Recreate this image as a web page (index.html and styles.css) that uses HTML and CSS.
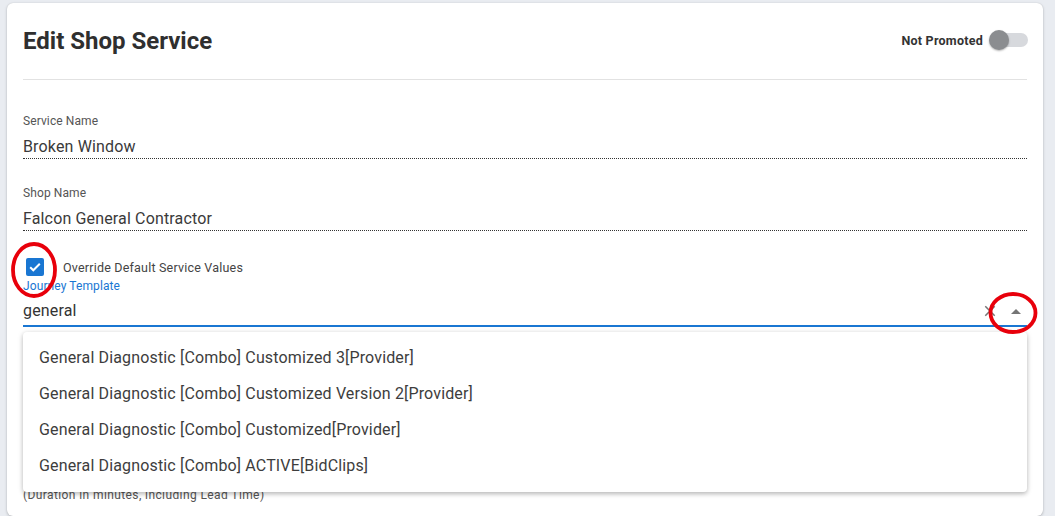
FILE: index.html
```html
<!DOCTYPE html>
<html>
<head>
<meta charset="utf-8">
<link rel="stylesheet" href="styles.css">
</head>
<body>
<div class="page">
  <div class="card">
    <div class="header">
      <h1 class="title">Edit Shop Service</h1>
      <div class="promo">
        <span class="promo-label">Not Promoted</span>
        <span class="switch"><span class="track"></span><span class="thumb"></span></span>
      </div>
    </div>

    <div class="field first">
      <div class="label">Service Name</div>
      <div class="input dotted">Broken Window</div>
    </div>
    <div class="field">
      <div class="label">Shop Name</div>
      <div class="input dotted">Falcon General Contractor</div>
    </div>

    <div class="check-row">
      <span class="checkbox">
        <svg viewBox="0 0 18 18" width="18" height="18"><path d="M4.2 9.2l3.1 3.1 6.5-6.6" fill="none" stroke="#fff" stroke-width="2"/></svg>
      </span>
      <span class="check-label">Override Default Service Values</span>
    </div>

    <div class="auto">
      <div class="label blue">Journey Template</div>
      <div class="input focused">
        <span class="val">general</span>
        <span class="clear">
          <svg viewBox="0 0 24 24" width="18" height="18"><path d="M19 6.41L17.59 5 12 10.59 6.41 5 5 6.41 10.59 12 5 17.59 6.41 19 12 13.41 17.59 19 19 17.59 13.41 12z" fill="#757575"/></svg>
        </span>
        <span class="arrow">
          <svg viewBox="0 0 24 24" width="24" height="24"><path d="M7 14l5-5 5 5z" fill="#757575"/></svg>
        </span>
      </div>
      <ul class="menu">
        <li>General Diagnostic [Combo] Customized 3[Provider]</li>
        <li>General Diagnostic [Combo] Customized Version 2[Provider]</li>
        <li>General Diagnostic [Combo] Customized[Provider]</li>
        <li>General Diagnostic [Combo] ACTIVE[BidClips]</li>
      </ul>
    </div>

    <div class="hint">(Duration in minutes, including Lead Time)</div>
  </div>

  <svg class="ring ring-a" width="50" height="60" viewBox="0 0 50 60"><ellipse cx="25" cy="30" rx="21" ry="26" fill="none" stroke="#e8000b" stroke-width="3.8"/></svg>
  <svg class="ring ring-b" width="54" height="48" viewBox="0 0 54 48"><ellipse cx="27" cy="24" rx="22.5" ry="19" fill="none" stroke="#e8000b" stroke-width="3.8"/></svg>
</div>
</body>
</html>
```

FILE: styles.css
```css
* { box-sizing: border-box; }
html, body { margin: 0; padding: 0; }
body {
  background: #e9ecf1;
  font-family: Roboto, "Noto Sans", Arial, sans-serif;
  color: #333;
  width: 1055px;
  height: 516px;
  overflow: hidden;
}
.page {
  position: relative;
  padding: 3px 12px 0 7px;
}
.card {
  background: #fff;
  border-radius: 6px;
  box-shadow: 0 1px 3px rgba(0,0,0,0.22), 0 0 1px rgba(0,0,0,0.15);
  padding: 0 16px;
  height: 513px;
}
.header {
  height: 77px;
  display: flex;
  align-items: center;
  justify-content: space-between;
  border-bottom: 1px solid #e2e2e2;
}
.title {
  margin: 0;
  font-size: 24px;
  font-weight: 700;
  color: #2f2f2f;
  letter-spacing: 0;
}
.promo {
  display: flex;
  align-items: center;
  gap: 6px;
  margin-top: -2px;
}
.promo-label {
  font-size: 12.5px;
  font-weight: 700;
  color: #333;
  letter-spacing: 0.25px;
}
.switch {
  position: relative;
  width: 38px;
  height: 22px;
  display: inline-block;
}
.track {
  position: absolute;
  left: 4px;
  top: 4px;
  width: 35px;
  height: 14px;
  border-radius: 7px;
  background: #d7d9dd;
}
.thumb {
  position: absolute;
  left: 0;
  top: 1px;
  width: 20px;
  height: 20px;
  border-radius: 50%;
  background: #8b8d90;
  box-shadow: 0 1px 2px rgba(0,0,0,0.3);
}
.field { margin-top: 27px; }
.field.first { margin-top: 34px; }
.label {
  font-size: 12px;
  line-height: 14px;
  color: #555;
  letter-spacing: 0.1px;
}
.label.blue { color: #1976d2; }
.input {
  margin-top: 6px;
  height: 25px;
  padding-top: 1px;
  font-size: 16px;
  line-height: 24px;
  color: #3a3a3a;
  letter-spacing: 0.15px;
}
.input.dotted { border-bottom: 1px dotted #333; }
.check-row {
  margin-top: 27px;
  height: 18px;
  display: flex;
  align-items: center;
}
.checkbox {
  margin-left: 3px;
  width: 18px;
  height: 18px;
  border-radius: 2px;
  background: #1976d2;
  display: inline-flex;
}
.check-label {
  margin-left: 19px;
  font-size: 12.5px;
  color: #444;
  letter-spacing: 0.2px;
}
.auto {
  position: relative;
  margin-top: 3px;
}
.auto .input {
  margin-top: 5px;
  height: 29px;
  display: flex;
  align-items: center;
  border-bottom: 2px solid #1976d2;
  padding-top: 0;
  padding-bottom: 2px;
}
.val { flex: 1; color: #333; }
.clear { display: inline-flex; margin-right: 5px; margin-top: 1px; }
.arrow { display: inline-flex; margin-right: -1px; margin-top: 3px; }
.menu {
  position: absolute;
  left: 0;
  right: 0;
  top: 53px;
  margin: 0;
  padding: 8px 0;
  list-style: none;
  background: #fff;
  border-radius: 4px;
  box-shadow: 0 2px 4px rgba(0,0,0,0.2), 0 1px 6px rgba(0,0,0,0.12);
  z-index: 2;
}
.menu li {
  height: 36px;
  line-height: 36px;
  padding-left: 16px;
  font-size: 16px;
  color: #3d3d3d;
  letter-spacing: 0.15px;
}
.hint {
  margin-top: 161px;
  font-size: 12px;
  color: #555;
  letter-spacing: 0.4px;
}
.ring { position: absolute; z-index: 5; }
.ring-a { left: 9px; top: 240px; }
.ring-b { left: 986px; top: 289px; }
```
